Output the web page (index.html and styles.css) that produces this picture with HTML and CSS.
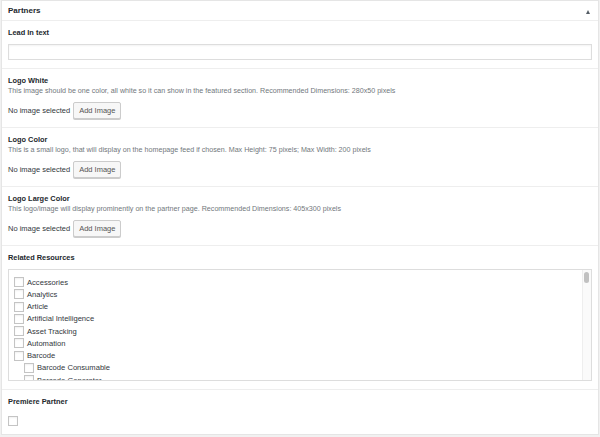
FILE: index.html
```html
<!DOCTYPE html>
<html>
  <head>
    <meta charset="UTF-8" />
    <title>Partners</title>
    <link rel="stylesheet" href="styles.css">
  </head>
  <body>
    <div class="postbox">
      <div class="postbox-header">
        <h2>Partners</h2>
        <span class="toggle-arrow"></span>
      </div>

      <div class="field">
        <label class="field-label" for="lead-in">Lead In text</label>
        <input type="text" id="lead-in" class="text-input" />
      </div>

      <div class="field">
        <div class="field-label">Logo White</div>
        <p class="description">This image should be one color, all white so it can show in the featured section. Recommended Dimensions: 280x50 pixels</p>
        <div class="image-row">
          <span>No image selected</span>
          <button type="button" class="button">Add Image</button>
        </div>
      </div>

      <div class="field">
        <div class="field-label">Logo Color</div>
        <p class="description">This is a small logo, that will display on the homepage feed if chosen. Max Height: 75 pixels; Max Width: 200 pixels</p>
        <div class="image-row">
          <span>No image selected</span>
          <button type="button" class="button">Add Image</button>
        </div>
      </div>

      <div class="field">
        <div class="field-label">Logo Large Color</div>
        <p class="description">This logo/image will display prominently on the partner page. Recommended Dimensions: 405x300 pixels</p>
        <div class="image-row">
          <span>No image selected</span>
          <button type="button" class="button">Add Image</button>
        </div>
      </div>

      <div class="field">
        <div class="field-label">Related Resources</div>
        <div class="checklist-box">
          <ul class="checklist">
            <li><span class="checkbox"></span>Accessories</li>
            <li><span class="checkbox"></span>Analytics</li>
            <li><span class="checkbox"></span>Article</li>
            <li><span class="checkbox"></span>Artificial Intelligence</li>
            <li><span class="checkbox"></span>Asset Tracking</li>
            <li><span class="checkbox"></span>Automation</li>
            <li><span class="checkbox"></span>Barcode</li>
            <li class="child"><span class="checkbox"></span>Barcode Consumable</li>
            <li class="child"><span class="checkbox"></span>Barcode Generator</li>
          </ul>
          <div class="scrollbar">
            <div class="scroll-thumb"></div>
          </div>
        </div>
      </div>

      <div class="field last">
        <div class="field-label">Premiere Partner</div>
        <span class="checkbox single"></span>
      </div>
    </div>
  </body>
</html>
```

FILE: styles.css
```css
body {
  margin: 0;
  background-color: #f1f1f1;
  font-family: "Liberation Sans", Arial, sans-serif;
  font-size: 7.5px;
  color: #32373c;
}

.postbox {
  width: 596px;
  margin-left: 1px;
  background-color: white;
  border: 1px solid #e5e5e5;
}

.postbox-header {
  display: flex;
  align-items: center;
  justify-content: space-between;
  height: 19px;
  padding: 0 6px 0 6px;
  border-bottom: 1px solid #eee;
}

.postbox-header h2 {
  margin: 0;
  font-size: 8px;
  font-weight: bold;
  color: #23282d;
}

.toggle-arrow {
  width: 0;
  height: 0;
  margin-top: 2px;
  margin-right: 2px;
  border-left: 2.5px solid transparent;
  border-right: 2.5px solid transparent;
  border-bottom: 4px solid #555d66;
}

.field {
  padding: 7px 6px 8px 6px;
  border-bottom: 1px solid #eee;
}

.field.last {
  border-bottom: none;
}

.field-label {
  display: block;
  height: 10px;
  line-height: 10px;
  font-size: 7.4px;
  font-weight: bold;
  color: #23282d;
  margin-bottom: 6px;
}

.text-input {
  display: block;
  width: 100%;
  height: 16px;
  margin: 0;
  padding: 0 4px;
  border: 1px solid #ddd;
  box-shadow: inset 0 1px 2px rgba(0, 0, 0, 0.05);
  box-sizing: border-box;
}

.description {
  margin: -6px 0 5px 0;
  line-height: 11px;
  font-size: 7.15px;
  color: #72777c;
}

.image-row {
  display: flex;
  align-items: center;
  gap: 3px;
  height: 17px;
}

.button {
  height: 17px;
  padding: 0 5px;
  margin: 0;
  font-family: inherit;
  font-size: 7.5px;
  color: #555;
  background-color: #f7f7f7;
  border: 1px solid #ccc;
  border-radius: 2px;
  box-shadow: 0 1px 0 #ccc;
}

.checklist-box {
  display: flex;
  height: 112px;
  border: 1px solid #ddd;
  box-sizing: border-box;
  overflow: hidden;
}

.checklist {
  flex: 1;
  list-style: none;
  margin: 0;
  padding: 6px 0 0 5px;
  font-size: 7.6px;
}

.checklist li {
  display: flex;
  align-items: center;
  gap: 3px;
  height: 12.25px;
  white-space: nowrap;
}

.checklist li.child {
  padding-left: 10px;
}

.checkbox {
  display: inline-block;
  width: 8px;
  height: 8px;
  border: 1px solid #c4c4c4;
  background-color: white;
  box-shadow: inset 0 1px 2px rgba(0, 0, 0, 0.06);
}

.checkbox.single {
  display: block;
  margin-top: 9px;
}

.scrollbar {
  width: 7px;
  background-color: #fafafa;
  border-left: 1px solid #eee;
  padding: 2px 0 0 1px;
}

.scroll-thumb {
  width: 5px;
  height: 11px;
  border-radius: 3px;
  background-color: #c1c1c1;
}
```
